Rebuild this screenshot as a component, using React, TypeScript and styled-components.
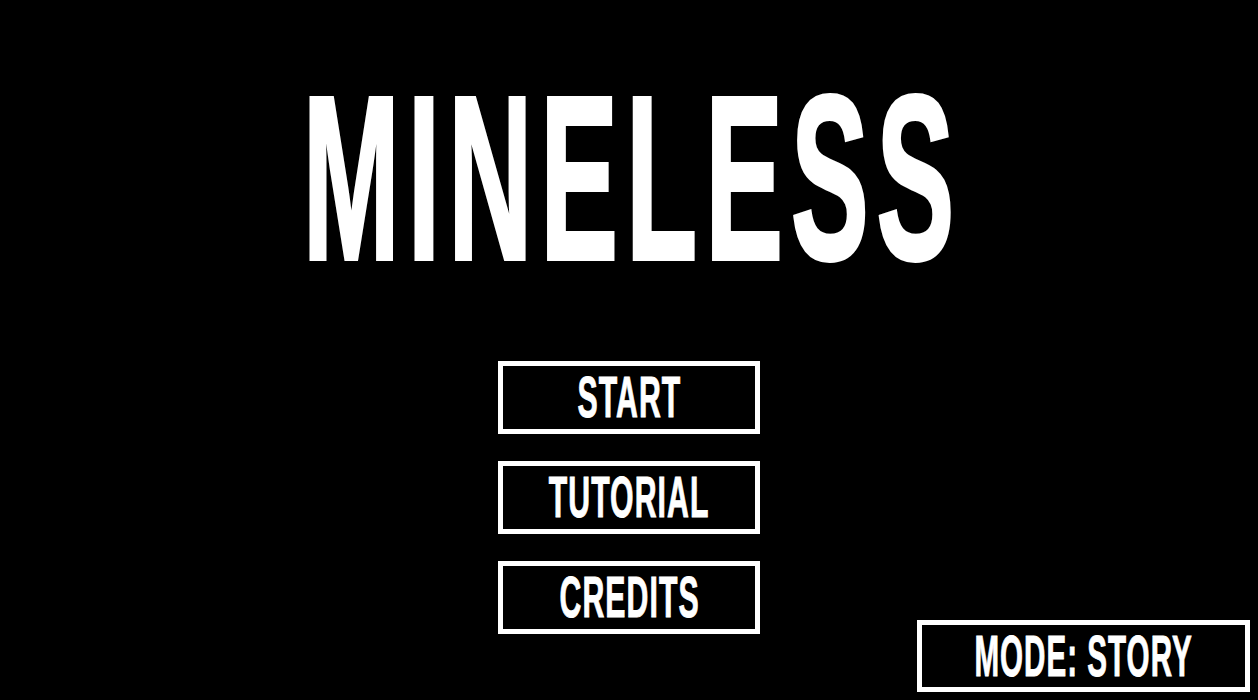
import styled, { createGlobalStyle } from "styled-components";

const GlobalStyle = createGlobalStyle`
  html, body {
    margin: 0;
    padding: 0;
    background: #000;
  }
  #root {
    min-height: 100vh;
  }
`;

const Screen = styled.main`
  position: relative;
  width: 100%;
  height: 700px;
  background: #000;
  color: #fff;
  font-family: "Liberation Sans", Arial, sans-serif;
  font-weight: 700;
  display: flex;
  flex-direction: column;
  align-items: center;
  overflow: hidden;
`;

// 細長いフォントの代わりに横方向を縮める
const Squeezed = styled.span<{ $scale: number; $stroke?: number; $spacing?: number }>`
  display: inline-block;
  transform: scaleX(${(p) => p.$scale});
  transform-origin: center;
  white-space: nowrap;
  letter-spacing: ${(p) => p.$spacing ?? 0}px;
  padding-left: ${(p) => p.$spacing ?? 0}px; /* 末尾の字間とつり合わせる */
  -webkit-text-stroke: ${(p) => p.$stroke ?? 0}px #fff; /* 線を少し太く */
`;

const Title = styled.h1`
  margin: 0;
  margin-top: 62px;
  font-size: 233px;
  line-height: 233px;
  font-weight: 700;
`;

const Menu = styled.nav`
  display: flex;
  flex-direction: column;
  gap: 27px;
  margin-top: 66px;
`;

const MenuButton = styled.button`
  width: 262px;
  height: 73px;
  border: 5px solid #fff;
  background: #000;
  color: #fff;
  font-family: inherit;
  font-weight: 700;
  font-size: 57px;
  line-height: 1;
  padding: 0;
  display: flex;
  align-items: center;
  justify-content: center;
  cursor: pointer;
`;

const ModeBox = styled.div`
  position: absolute;
  right: 8px;
  bottom: 8px;
  width: 333px;
  height: 72px;
  box-sizing: border-box;
  border: 5px solid #fff;
  display: flex;
  align-items: center;
  justify-content: center;
  font-size: 58px;
  line-height: 1;
`;

const items = ["START", "TUTORIAL", "CREDITS"];

export default function App() {
  return (
    <>
      <GlobalStyle />
      <Screen>
        <Title>
          <Squeezed $scale={0.5} $stroke={4} $spacing={16}>MINELESS</Squeezed>
        </Title>
        <Menu>
          {items.map((label) => (
            <MenuButton key={label}>
              <Squeezed $scale={0.53} $stroke={1} $spacing={2}>{label}</Squeezed>
            </MenuButton>
          ))}
        </Menu>
        <ModeBox>
          <Squeezed $scale={0.51} $stroke={1} $spacing={2}>MODE: STORY</Squeezed>
        </ModeBox>
      </Screen>
    </>
  );
}
